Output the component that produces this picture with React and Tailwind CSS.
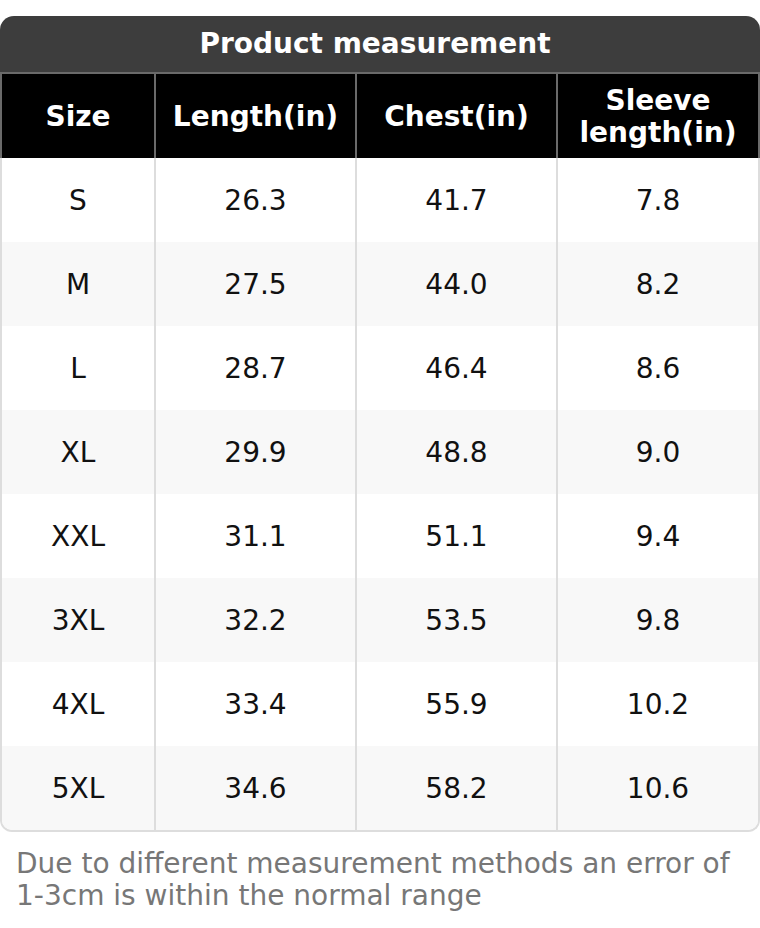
import React from 'react'

const rows = [
  ['S', '26.3', '41.7', '7.8'],
  ['M', '27.5', '44.0', '8.2'],
  ['L', '28.7', '46.4', '8.6'],
  ['XL', '29.9', '48.8', '9.0'],
  ['XXL', '31.1', '51.1', '9.4'],
  ['3XL', '32.2', '53.5', '9.8'],
  ['4XL', '33.4', '55.9', '10.2'],
  ['5XL', '34.6', '58.2', '10.6'],
]

const grid = 'grid grid-cols-[152px_201px_201px_1fr]'

export default function App() {
  return (
    <div className="w-[760px] bg-white pt-4 pb-4" style={{ fontFamily: '"DejaVu Sans", sans-serif' }}>
      <div className="h-[56px] rounded-t-[14px] bg-[#3d3d3d] flex items-center justify-center pr-[10px] text-white font-bold text-[28px] leading-none">
        Product measurement
      </div>

      <div className={`${grid} h-[86px] bg-black border-x-2 border-t-2 border-[#6a6a6a] text-white font-bold text-[28px] leading-[32px] text-center`}>
        <div className="flex items-center justify-center pt-[2px]">Size</div>
        <div className="flex items-center justify-center pt-[2px] border-l-2 border-[#6a6a6a]">Length(in)</div>
        <div className="flex items-center justify-center pt-[2px] border-l-2 border-[#6a6a6a]">Chest(in)</div>
        <div className="flex items-center justify-center pt-[2px] border-l-2 border-[#6a6a6a]">Sleeve<br />length(in)</div>
      </div>

      <div className="border-x-2 border-b-2 border-[#dddddd] rounded-b-xl overflow-hidden">
        {rows.map((r, i) => (
          <div key={r[0]} className={`${grid} h-[84px] text-[28px] text-[#111] ${i % 2 ? 'bg-[#f8f8f8]' : 'bg-white'}`}>
            {r.map((c, j) => (
              <div key={j} className={`flex items-center justify-center pt-[2px] ${j ? 'border-l-2 border-[#dddddd]' : ''}`}>{c}</div>
            ))}
          </div>
        ))}
      </div>

      <p className="px-4 pt-4 text-[28px] leading-[32px] text-[#777]">
        Due to different measurement methods an error of 1-3cm is within the normal range
      </p>
    </div>
  )
}
